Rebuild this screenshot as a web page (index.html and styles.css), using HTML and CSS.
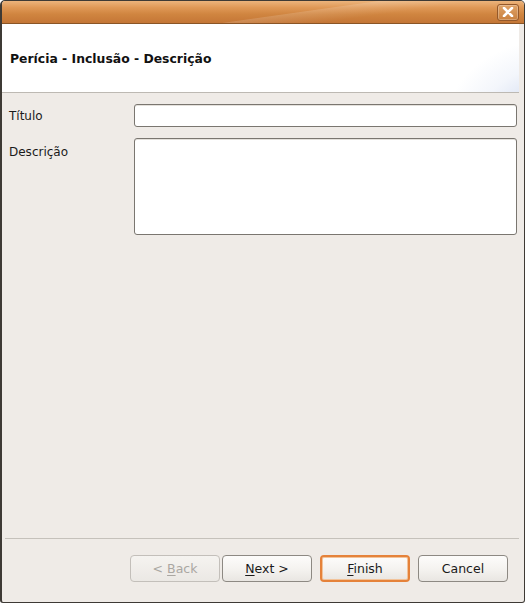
FILE: index.html
```html
<!DOCTYPE html>
<html lang="pt">
<head>
<meta charset="utf-8">
<title>Perícia - Inclusão - Descrição</title>
<link rel="stylesheet" href="styles.css">
</head>
<body>
<div class="window">
  <div class="titlebar">
    <div class="titlebar-shine"></div>
    <button class="close" type="button" aria-label="Fechar">
      <svg width="12" height="10" viewBox="0 0 12 10"><path d="M2 1 L10 9 M10 1 L2 9" stroke="#fff" stroke-width="2.6" stroke-linecap="round"/></svg>
    </button>
  </div>
  <div class="header">
    <h1 class="header-title">Perícia - Inclusão - Descrição</h1>
    <div class="header-swirl"></div>
  </div>
  <div class="content">
    <div class="form-row">
      <label class="form-label" for="titulo">Título</label>
      <input class="text-input" id="titulo" type="text">
    </div>
    <div class="form-row">
      <label class="form-label form-label-area" for="descricao">Descrição</label>
      <textarea class="text-area" id="descricao"></textarea>
    </div>
  </div>
  <div class="separator"></div>
  <div class="footer">
    <button class="btn btn-disabled" type="button">&lt; <u>B</u>ack</button>
    <button class="btn btn-next" type="button"><u>N</u>ext &gt;</button>
    <button class="btn btn-default" type="button"><u>F</u>inish</button>
    <button class="btn" type="button">Cancel</button>
  </div>
</div>
</body>
</html>
```
FILE: styles.css
```css
html, body {
  margin: 0;
  padding: 0;
  background: #ffffff;
}
body {
  font-family: "DejaVu Sans", "Liberation Sans", sans-serif;
  font-size: 12px;
  color: #1a1a1a;
}
.window {
  width: 525px;
  height: 603px;
  box-sizing: border-box;
  border: 1px solid #3e3a35;
  border-left-width: 2px;
  border-radius: 5px 5px 3px 3px;
  background: #efebe7;
  display: flex;
  flex-direction: column;
  overflow: hidden;
}
.titlebar {
  height: 22px;
  flex: none;
  position: relative;
  display: flex;
  justify-content: flex-end;
  align-items: center;
  padding-right: 5px;
  background: linear-gradient(#ecb47c 0%, #df9856 30%, #d08540 60%, #c47636 100%);
  border-bottom: 1px solid #8a5526;
}
.titlebar-shine {
  position: absolute;
  left: 0;
  top: 0;
  width: 100%;
  height: 100%;
  background: linear-gradient(172deg, rgba(255,255,255,0) 55%, rgba(255,255,255,0.14) 56%, rgba(255,255,255,0) 70%);
  pointer-events: none;
}
.close {
  position: relative;
  width: 22px;
  height: 17px;
  padding: 0;
  margin: 0;
  border: 1px solid #94582a;
  border-radius: 3px;
  background: linear-gradient(#e0a368, #c9813f);
  box-shadow: inset 0 0 0 1px rgba(255,255,255,0.25);
  display: flex;
  align-items: center;
  justify-content: center;
}
.header {
  height: 68px;
  flex: none;
  position: relative;
  background: #ffffff;
  border-bottom: 1px solid #bdb9b3;
  display: flex;
  align-items: center;
  padding-left: 8px;
  margin-right: 5px;
}
.header-title {
  margin: 0;
  font-size: 12.4px;
  font-weight: bold;
  color: #111;
  padding-top: 1px;
}
.header-swirl {
  position: absolute;
  right: 0;
  top: 0;
  width: 90px;
  height: 68px;
  background:
    radial-gradient(ellipse 110px 90px at 125px 105px, #d3ddf1 0%, #dfe6f5 45%, rgba(238,242,250,0.7) 70%, rgba(255,255,255,0) 100%);
}
.content {
  flex: 1;
  padding: 11px 7px 0 7px;
  display: flex;
  flex-direction: column;
  gap: 11px;
}
.form-row {
  display: flex;
  align-items: flex-start;
}
.form-label {
  width: 125px;
  flex: none;
  padding-top: 5px;
}
.form-label-area {
  padding-top: 7px;
}
.text-input, .text-area {
  flex: 1;
  box-sizing: border-box;
  border: 1px solid #7a7670;
  border-radius: 3px;
  background: #fff;
  margin: 0;
  font: inherit;
  box-shadow: inset 0 1px 0 #e4e1dc;
}
.text-input {
  height: 23px;
}
.text-area {
  height: 97px;
  resize: none;
}
.separator {
  flex: none;
  height: 1px;
  background: #c5c1bb;
  margin: 0 5px 0 3px;
}
.footer {
  flex: none;
  height: 63px;
  box-sizing: border-box;
  padding: 16px 16px 0 0;
  display: flex;
  justify-content: flex-end;
  align-items: flex-start;
  gap: 8px;
}
.btn {
  width: 90px;
  height: 27px;
  box-sizing: border-box;
  border: 1px solid #8d8983;
  border-radius: 4px;
  background: linear-gradient(#fdfcfb 0%, #f4f2ef 55%, #e9e6e2 100%);
  font: inherit;
  font-size: 12.5px;
  color: #1a1a1a;
  padding: 0;
  margin: 0;
}
.btn u {
  text-underline-offset: 2px;
}
.btn-disabled {
  color: #aaa7a2;
  border-color: #c3bfba;
  background: linear-gradient(#f5f3f0, #ebe8e4);
}
.btn-next {
  margin-left: -6px;
}
.btn-default {
  border: 2px solid #e5823a;
  box-shadow: inset 0 0 0 1px #f2c39a;
}
```
